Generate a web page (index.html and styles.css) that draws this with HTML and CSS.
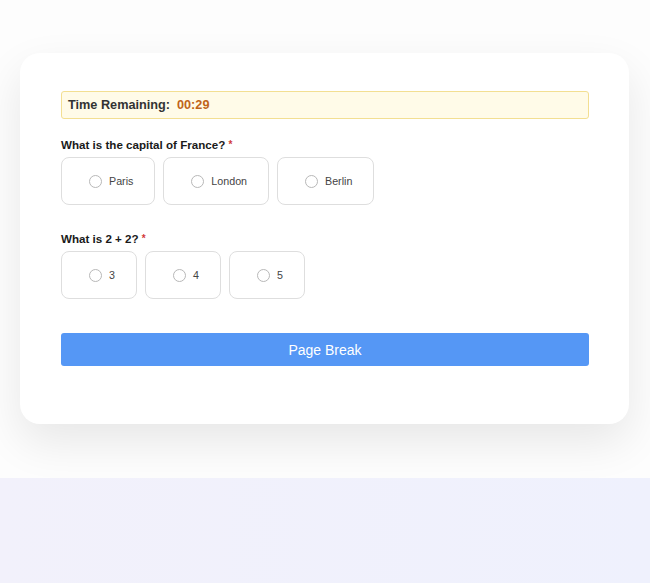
FILE: index.html
```html
<!DOCTYPE html>
<html lang="en">
<head>
<meta charset="utf-8">
<title>Quiz</title>
<link rel="stylesheet" href="styles.css">
</head>
<body>
<div class="stage">
  <div class="card">
    <div class="timer">Time Remaining:<span class="time">00:29</span></div>

    <div class="question">
      <div class="label">What is the capital of France? <span class="req">*</span></div>
      <div class="options">
        <label class="option"><span class="radio"></span>Paris</label>
        <label class="option"><span class="radio"></span>London</label>
        <label class="option"><span class="radio"></span>Berlin</label>
      </div>
    </div>

    <div class="question second">
      <div class="label">What is 2 + 2? <span class="req">*</span></div>
      <div class="options">
        <label class="option"><span class="radio"></span>3</label>
        <label class="option"><span class="radio"></span>4</label>
        <label class="option"><span class="radio"></span>5</label>
      </div>
    </div>

    <button class="btn" type="button">Page Break</button>
  </div>
</div>
<div class="footer"></div>
</body>
</html>
```

FILE: styles.css
```css
* { box-sizing: border-box; }
html, body { margin: 0; padding: 0; }
body {
  font-family: "Liberation Sans", Arial, sans-serif;
  background: #ffffff;
  width: 650px;
  height: 583px;
  overflow: hidden;
}
.stage {
  height: 478px;
  padding: 53px 21px 0 20px;
  background: #fdfdfd;
}
.card {
  background: #ffffff;
  border-radius: 20px;
  height: 371px;
  padding: 38px 40px 0 41px;
  box-shadow: 0 18px 45px rgba(0, 0, 0, 0.09);
}
.timer {
  height: 28px;
  border: 1px solid #f3df92;
  background: #fffbe8;
  border-radius: 3px;
  padding: 0 6px;
  line-height: 26px;
  font-size: 12.7px;
  font-weight: bold;
  color: #333333;
}
.time {
  color: #c0641a;
  margin-left: 7px;
}
.question { margin-top: 18px; }
.question.second { margin-top: 26px; }
.label {
  font-size: 11.6px;
  font-weight: bold;
  line-height: 16px;
  color: #1a1a1a;
}
.req { color: #d23a3a; font-size: 10px; vertical-align: 1px; }
.options {
  display: flex;
  gap: 8px;
  margin-top: 4px;
}
.option {
  display: flex;
  align-items: center;
  height: 48px;
  padding: 0 21px 0 27px;
  border: 1px solid #dedede;
  border-radius: 8px;
  font-size: 10.7px;
  color: #444444;
  background: #ffffff;
}
.radio {
  width: 13px;
  height: 13px;
  border: 1px solid #b8b8b8;
  border-radius: 50%;
  margin-right: 7px;
  background: #ffffff;
}
.btn {
  display: block;
  width: 100%;
  height: 33px;
  margin-top: 34px;
  border: none;
  border-radius: 3px;
  background: #5597f5;
  color: #ffffff;
  font-family: "Liberation Sans", Arial, sans-serif;
  font-size: 14px;
}
.footer {
  height: 105px;
  background: linear-gradient(90deg, #f2f1fb 0%, #eff1fd 100%);
}
```
